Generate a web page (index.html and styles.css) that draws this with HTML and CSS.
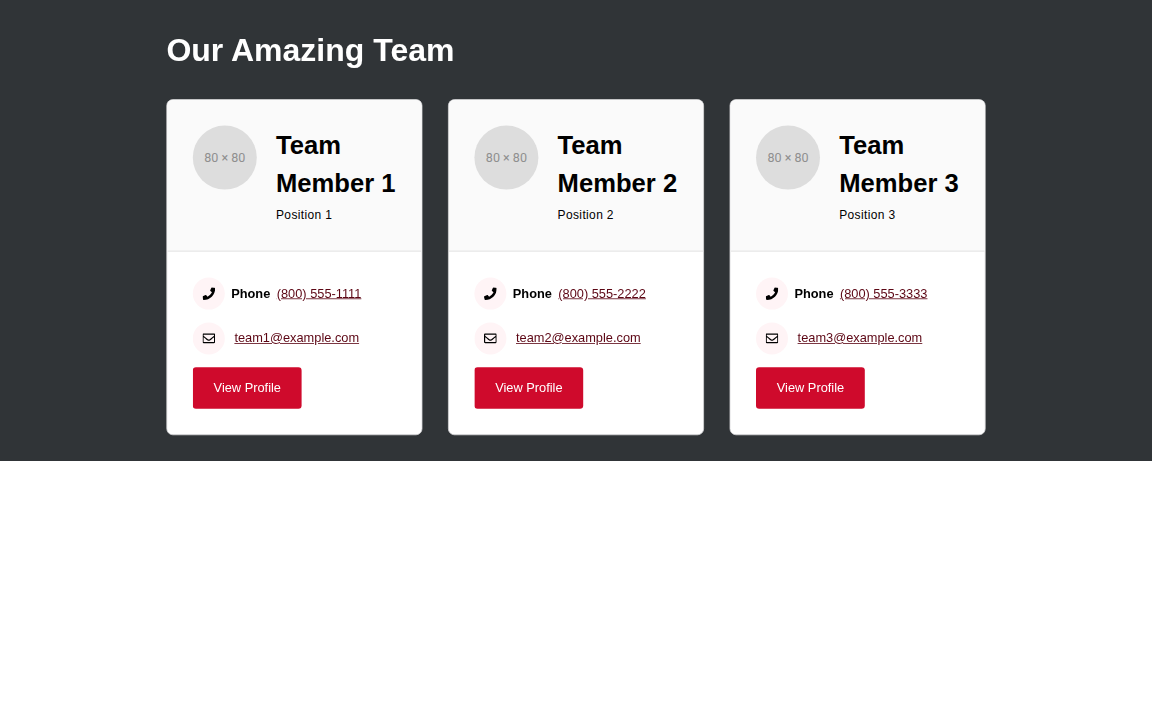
FILE: index.html
```html
<!DOCTYPE html>
<html lang="en">
<head>
<meta charset="utf-8">
<title>Our Amazing Team</title>
<link rel="stylesheet" href="styles.css">
</head>
<body>
<svg class="defs" aria-hidden="true">
  <symbol id="phone" viewBox="0 0 512 512"><path d="M493.4 24.6l-104-24c-11.3-2.6-22.9 3.3-27.5 13.9l-48 112c-4.2 9.8-1.4 21.3 6.9 28l60.6 49.6c-36 76.7-98.9 140.5-177.2 177.2l-49.6-60.6c-6.8-8.3-18.2-11.1-28-6.9l-112 48C3.9 366.500-2 378.100.6 389.400l24 104C27.100 504.200 36.700 512 48 512c256.100 0 464-207.500 464-464 0-11.200-7.700-20.900-18.600-23.400z"/></symbol>
  <symbol id="mail" viewBox="0 0 512 512"><path d="M464 64H48C21.490 64 0 85.490 0 112v288c0 26.510 21.490 48 48 48h416c26.510 0 48-21.490 48-48V112c0-26.510-21.490-48-48-48zm0 48v40.805c-22.422 18.259-58.168 46.651-134.587 106.490-16.841 13.247-50.201 45.072-73.413 44.701-23.208.375-56.579-31.459-73.413-44.701C106.180 199.465 70.425 171.067 48 152.805V112h416zM48 400V214.398c22.914 18.251 55.409 43.862 104.938 82.646 21.857 17.205 60.134 55.186 103.062 54.955 42.717.231 80.509-37.199 103.053-54.947 49.528-38.783 82.032-64.401 104.947-82.653V400H48z"/></symbol>
</svg>
<section class="team">
  <div class="container">
    <h2 class="heading">Our Amazing Team</h2>
    <div class="cards">
      <article class="card">
        <header class="card-header">
          <div class="avatar">80 × 80</div>
          <div class="who"><h3 class="name">Team Member 1</h3><p class="position">Position 1</p></div>
        </header>
        <div class="card-body">
          <div class="contact phone"><span class="icon"><svg><use href="#phone"/></svg></span><strong>Phone</strong><a href="#">(800) 555-1111</a></div>
          <div class="contact mail"><span class="icon"><svg><use href="#mail"/></svg></span><a href="#">team1@example.com</a></div>
          <a class="button" href="#">View Profile</a>
        </div>
      </article>
      <article class="card">
        <header class="card-header">
          <div class="avatar">80 × 80</div>
          <div class="who"><h3 class="name">Team Member 2</h3><p class="position">Position 2</p></div>
        </header>
        <div class="card-body">
          <div class="contact phone"><span class="icon"><svg><use href="#phone"/></svg></span><strong>Phone</strong><a href="#">(800) 555-2222</a></div>
          <div class="contact mail"><span class="icon"><svg><use href="#mail"/></svg></span><a href="#">team2@example.com</a></div>
          <a class="button" href="#">View Profile</a>
        </div>
      </article>
      <article class="card">
        <header class="card-header">
          <div class="avatar">80 × 80</div>
          <div class="who"><h3 class="name">Team Member 3</h3><p class="position">Position 3</p></div>
        </header>
        <div class="card-body">
          <div class="contact phone"><span class="icon"><svg><use href="#phone"/></svg></span><strong>Phone</strong><a href="#">(800) 555-3333</a></div>
          <div class="contact mail"><span class="icon"><svg><use href="#mail"/></svg></span><a href="#">team3@example.com</a></div>
          <a class="button" href="#">View Profile</a>
        </div>
      </article>
    </div>
  </div>
</section>
</body>
</html>
```
FILE: styles.css
```css
* { box-sizing: border-box; }
body {
  margin: 0;
  background: #fff;
  color: #000;
  font: 16px/1.5 "Liberation Sans", Arial, sans-serif;
}
.defs { display: none; }
.team {
  display: flex;
  justify-content: center;
  height: 460.8px;
  background: #303437;
}
.container {
  flex: none;
  width: 1024px;
  height: 576px;
  padding: 32px 0;
  transform: scale(.8);
  transform-origin: 50% 0;
}
.heading { margin: 0 0 32px; color: #fff; font-size: 40px; line-height: 60px; }
.cards { display: grid; grid-template-columns: repeat(3, 320px); gap: 32px; }
.card {
  height: 420px;
  background: #fff;
  border: 1px solid #d5d6d8;
  border-radius: 8px;
  overflow: hidden;
}
.card-header {
  display: flex;
  align-items: flex-start;
  gap: 24px;
  height: 190px;
  padding: 32px;
  background: #fafafa;
  border-bottom: 2px solid #ececec;
}
.avatar {
  flex: none;
  width: 80px;
  height: 80px;
  border-radius: 50%;
  background: #ddd;
  color: #8f8f8f;
  font: 400 15.7px/80px Roboto, sans-serif;
  text-align: center;
}
.name { margin: 0; font-size: 32px; line-height: 48px; }
.position { margin: 0; font-size: 15px; line-height: 32px; letter-spacing: .45px; }
.card-body {
  display: flex;
  flex-direction: column;
  align-items: flex-start;
  padding: 32px;
}
.contact { display: flex; align-items: center; height: 40px; margin-bottom: 16px; }
.icon {
  display: flex;
  align-items: center;
  justify-content: center;
  width: 40px;
  height: 40px;
  margin-right: 8px;
  border-radius: 50%;
  background: #fff4f6;
}
.icon svg { width: 16px; height: 16px; }
.contact a { color: #5c0614; }
.phone a { margin-left: 8px; }
.mail a { margin-left: 4px; }
.button {
  padding: 14px 26px;
  border-radius: 4px;
  background: #cf0a2c;
  color: #fff;
  text-decoration: none;
}
```
